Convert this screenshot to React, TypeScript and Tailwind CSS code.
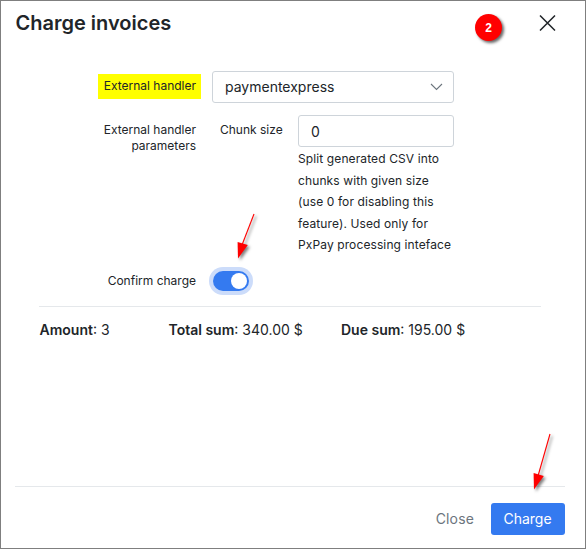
import React from "react";

interface ArrowProps {
  className: string;
  length: number;
}

function Arrow({ className, length }: ArrowProps) {
  return (
    <svg className={`absolute overflow-visible ${className}`} width="24" height="60" viewBox="0 0 24 60">
      <g className="drop-shadow-[2px_2px_1.5px_rgba(0,0,0,0.5)]">
        <path d={`M19 2 L7 ${length - 12}`} stroke="#ff0000" strokeWidth="1.1" />
        <path d={`M2.6 ${length - 15} L12.8 ${length - 12} L3 ${length + 1.5} Z`} fill="#ff0000" />
      </g>
    </svg>
  );
}

function Stat({ label, value, className }: { label: string; value: string; className: string }) {
  return (
    <div className={className}>
      <span className="font-semibold">{label}</span>: {value}
    </div>
  );
}

export default function App() {
  return (
    <div className="relative flex h-[549px] w-[586px] flex-col border border-[#7f7f7f] bg-white font-['Inter',sans-serif] text-[#212529]">
      <header className="flex h-[70px] items-start justify-between pl-[14.5px] pr-[29px]">
        <h1 className="mt-[7px] text-[20px] font-semibold leading-[30px]">Charge invoices</h1>
        <button aria-label="Dismiss" className="mt-[14px]">
          <svg width="17" height="16" viewBox="0 0 17 16" fill="none" stroke="#212529" strokeWidth="1.5">
            <path d="M1 .5 16 15.5M16 .5 1 15.5" />
          </svg>
        </button>
      </header>

      <main className="flex flex-1 flex-col text-[12px]">
        <div className="flex h-8">
          <div className="ml-[97px] mt-[3px] h-[25px] w-[103px] bg-[#ffff00] pr-[5px] text-right leading-[24px]">External handler</div>
          <div className="ml-[11px] flex h-8 w-[242px] items-center justify-between rounded-[3px] border border-[#ced4da] pl-3 pr-[10px] text-[14px]">
            <span className="-mt-[2px]">paymentexpress</span>
            <svg width="13" height="8" viewBox="0 0 13 8" fill="none" stroke="#6c757d" strokeWidth="1.1">
              <path d="m1 1 5.5 5.5L12 1" />
            </svg>
          </div>
        </div>

        <div className="mt-3 flex">
          <div className="mt-[7px] w-[195px] pl-[90px] text-right leading-4">External handler parameters</div>
          <div className="ml-[24px] mt-[7px] w-[78px] leading-4">Chunk size</div>
          <div className="w-[156px]">
            <div className="flex h-8 items-center rounded-[3px] border border-[#ced4da] pl-3 text-[14px]">0</div>
            <div className="whitespace-nowrap pt-px leading-[21.5px] tracking-[0.11px]">
              Split generated CSV into<br />chunks with given size<br />(use 0 for disabling this<br />feature). Used only for<br />PxPay processing inteface
            </div>
          </div>
        </div>

        <div className="mt-[15px] flex h-5 items-center">
          <div className="w-[195px] text-right">Confirm charge</div>
          <div className="ml-[17px] flex h-5 w-9 items-center justify-end rounded-full bg-[#347af0] pr-[2px] ring-4 ring-[#ccdcfa]">
            <div className="size-4 rounded-full bg-white" />
          </div>
        </div>

        <div className="ml-[38px] mt-[15px] flex w-[502px] border-t border-[#e5e8eb] pt-3 text-[14px] leading-[21px]">
          <Stat label="Amount" value="3" className="w-[129.5px] pl-[0.5px]" />
          <Stat label="Total sum" value="340.00 $" className="w-[172.5px]" />
          <Stat label="Due sum" value="195.00 $" className="w-[180px]" />
        </div>
      </main>

      <footer className="mx-[14px] mr-[20px] flex h-[62px] items-start justify-end border-t border-[#e5e8eb] pt-4 text-[14px]">
        <button className="mr-[17px] h-8 pb-[2px] tracking-[0.15px] text-[#6c757d]">Close</button>
        <button className="h-8 w-[74px] rounded-[3px] bg-[#347af0] pb-[2px] pr-px text-white">Charge</button>
      </footer>

      <div className="absolute left-[474px] top-[13px] flex size-[27px] items-center justify-center rounded-full bg-[#ff0000] pt-px font-['Liberation_Sans',sans-serif] text-[12px] font-bold text-white shadow-[2px_2px_3px_rgba(0,0,0,0.6)]">2</div>
      <Arrow className="left-[234px] top-[211px]" length={45} />
      <Arrow className="left-[530px] top-[431px]" length={56} />
    </div>
  );
}
